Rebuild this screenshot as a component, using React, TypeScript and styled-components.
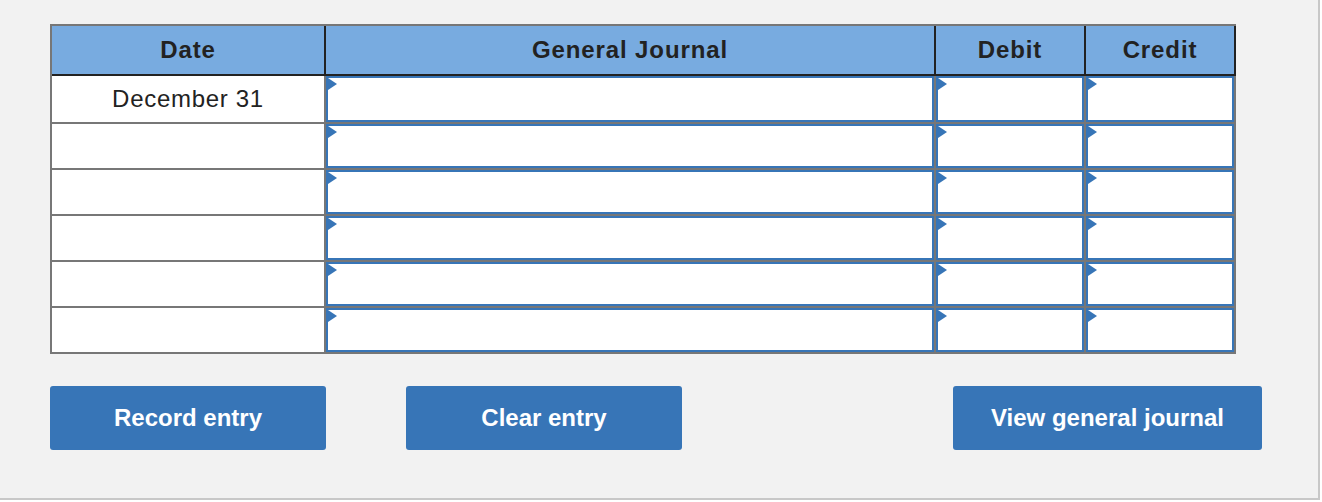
import React from "react";
import styled, { createGlobalStyle } from "styled-components";

const GlobalStyle = createGlobalStyle`
  html, body {
    margin: 0;
    padding: 0;
    background: #ffffff;
  }
  * { box-sizing: border-box; }
`;

const Panel = styled.div`
  width: 1320px;
  height: 500px;
  background: #f2f2f2;
  border-right: 2px solid #c8c8c8;
  border-bottom: 2px solid #c8c8c8;
  padding: 24px 0 0 50px;
  font-family: "Liberation Sans", Arial, sans-serif;
`;

const Journal = styled.div`
  display: grid;
  grid-template-columns: 274px 610px 150px 150px;
  width: 1186px;
  border-top: 2px solid #777777;
  border-left: 2px solid #777777;
`;

const HeadCell = styled.div`
  height: 50px;
  background: #78abe0;
  border-right: 2px solid #222222;
  border-bottom: 2px solid #222222;
  display: flex;
  align-items: center;
  justify-content: center;
  font-size: 24px;
  font-weight: 700;
  letter-spacing: 0.9px;
  color: #222222;
`;

const BodyCell = styled.div<{ $first?: boolean }>`
  height: ${(p) => (p.$first ? 48 : 46)}px;
  background: #ffffff;
  border-right: 2px solid #777777;
  border-bottom: 2px solid #777777;
  display: flex;
  align-items: center;
  justify-content: center;
  font-size: 24px;
  letter-spacing: 0.7px;
  color: #222222;
`;

const EntryBox = styled.div`
  position: relative;
  width: 100%;
  height: 100%;
  border: 2px solid #3775b7;
  background: #ffffff;
`;

const Marker = styled.span`
  position: absolute;
  left: 0;
  top: 0;
  width: 0;
  height: 0;
  border-left: 9px solid #3775b7;
  border-top: 6.5px solid transparent;
  border-bottom: 6.5px solid transparent;
`;

const Actions = styled.div`
  display: flex;
  margin-top: 32px;
`;

const ActionButton = styled.button<{ $width: number; $offset: number }>`
  width: ${(p) => p.$width}px;
  margin-left: ${(p) => p.$offset}px;
  height: 64px;
  border: none;
  border-radius: 3px;
  background: #3775b7;
  color: #ffffff;
  font-family: "Liberation Sans", Arial, sans-serif;
  font-size: 24px;
  font-weight: 700;
  padding: 0;
  cursor: pointer;
`;

const headers = ["Date", "General Journal", "Debit", "Credit"];
const rows = ["December 31", "", "", "", "", ""];

function Entry() {
  return (
    <EntryBox>
      <Marker />
    </EntryBox>
  );
}

export default function App() {
  return (
    <>
      <GlobalStyle />
      <Panel>
        <Journal>
          {headers.map((h) => (
            <HeadCell key={h}>{h}</HeadCell>
          ))}
          {rows.map((date, i) => (
            <React.Fragment key={i}>
              <BodyCell $first={i === 0}>{date}</BodyCell>
              <BodyCell $first={i === 0}>
                <Entry />
              </BodyCell>
              <BodyCell $first={i === 0}>
                <Entry />
              </BodyCell>
              <BodyCell $first={i === 0}>
                <Entry />
              </BodyCell>
            </React.Fragment>
          ))}
        </Journal>
        <Actions>
          <ActionButton $width={276} $offset={0}>Record entry</ActionButton>
          <ActionButton $width={276} $offset={80}>Clear entry</ActionButton>
          <ActionButton $width={309} $offset={271}>View general journal</ActionButton>
        </Actions>
      </Panel>
    </>
  );
}
